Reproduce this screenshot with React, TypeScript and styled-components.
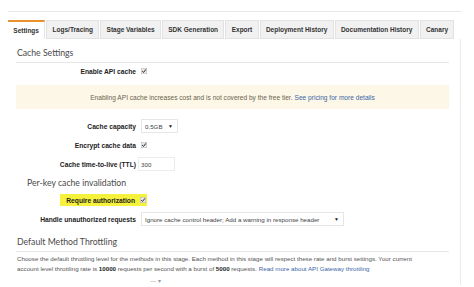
import React from "react";
import styled, { createGlobalStyle } from "styled-components";

const Global = createGlobalStyle`
  html, body { margin: 0; padding: 0; background: #fff; }
  body { font-family: "Liberation Sans", Arial, sans-serif; color: #333; }
  * { box-sizing: border-box; }
`;

const Page = styled.div`
  width: 474px;
  height: 287px;
  overflow: hidden;
  padding: 11px 12px 0 8px;
`;

const TopRule = styled.div`
  height: 1px;
  background: #e8e8e8;
`;

const TabBar = styled.div`
  display: flex;
  gap: 1px;
  margin-top: 8px;
  height: 19px;
  align-items: stretch;
`;

const Tab = styled.div<{ $active?: boolean }>`
  display: flex;
  align-items: center;
  justify-content: center;
  padding: 0 5.3px;
  font-size: 6.5px;
  font-weight: bold;
  color: #333;
  white-space: nowrap;
  background: ${(p) => (p.$active ? "#fff" : "#f1f1f1")};
  border: 1px solid #e2e2e2;
  border-bottom: ${(p) => (p.$active ? "1px solid #fff" : "1px solid #e2e2e2")};
  border-top: ${(p) => (p.$active ? "2px solid #e8912d" : "1px solid #e2e2e2")};
  ${(p) => (p.$active ? "border-left: none;" : "")}
`;

const Panel = styled.div`
  height: 246px;
  margin-right: 1px;
  border-right: 1px solid #ebebeb;
  padding: 0 11px 0 8px;
  display: flex;
  flex-direction: column;
`;

const SectionHeading = styled.div<{ $top: number; $indent?: number; $rule?: boolean }>`
  margin-top: ${(p) => p.$top}px;
  padding-left: ${(p) => p.$indent ?? 1}px;
  font-family: Lato, "Open Sans", sans-serif;
  font-size: 8.7px;
  line-height: 14px;
  color: #4a4a4a;
  ${(p) => (p.$rule ? "padding-bottom: 2px; border-bottom: 1px solid #e6e6e6;" : "")}
`;

const Row = styled.div<{ $top: number }>`
  display: flex;
  align-items: center;
  gap: 5px;
  height: 14px;
  margin-top: ${(p) => p.$top}px;
`;

const Label = styled.div`
  width: 120px;
  text-align: right;
  font-size: 6.7px;
  font-weight: bold;
  color: #222;
  white-space: nowrap;
`;

const Highlight = styled.div`
  display: flex;
  align-items: center;
  gap: 5px;
  margin-left: 44px;
  width: 87px;
  height: 12px;
  padding-right: 1px;
  background: #f6f23c;
`;

const HighlightLabel = styled(Label)`
  width: auto;
  flex: 1;
`;

const Notice = styled.div`
  margin-top: 7px;
  height: 24px;
  background: #fcf7e6;
  display: flex;
  align-items: center;
  justify-content: center;
  font-size: 6.6px;
  color: #6b6352;
  white-space: nowrap;
`;

const Link = styled.span`
  color: #3c66a8;
  margin-left: 2px;
`;

const SelectBox = styled.div<{ $w: number }>`
  width: ${(p) => p.$w}px;
  height: 14px;
  border: 1px solid #e6e6e6;
  background: #fff;
  display: flex;
  align-items: center;
  justify-content: space-between;
  padding: 0 4px 0 3px;
  font-size: 6.2px;
  color: #444;
  white-space: nowrap;
`;

const Caret = styled.span`
  font-size: 5px;
  color: #222;
`;

const InputBox = styled.div`
  width: 37px;
  height: 14px;
  margin-left: -3px;
  border: 1px solid #ececec;
  display: flex;
  align-items: center;
  padding-left: 2px;
  font-size: 6.2px;
  color: #444;
`;

const Paragraph = styled.div`
  margin-top: 2px;
  padding-left: 1px;
  font-size: 6.2px;
  line-height: 10px;
  color: #555;
  white-space: nowrap;
  b { color: #222; }
`;

const Trailing = styled.div`
  margin-top: 3px;
  padding-left: 134px;
  font-size: 6px;
  color: #999;
`;

const Check = () => (
  <svg width="6" height="6" viewBox="0 0 6 6">
    <rect x="0.25" y="0.25" width="5.5" height="5.5" fill="#e9e9e9" stroke="#b5b5b5" strokeWidth="0.5" />
    <path d="M1.2 3.1 L2.5 4.4 L4.9 1.4" fill="none" stroke="#222" strokeWidth="1" />
  </svg>
);

const tabs = [
  "Settings",
  "Logs/Tracing",
  "Stage Variables",
  "SDK Generation",
  "Export",
  "Deployment History",
  "Documentation History",
  "Canary",
];

export default function App() {
  return (
    <Page>
      <Global />
      <TopRule />
      <TabBar>
        {tabs.map((t, i) => (
          <Tab key={t} $active={i === 0}>
            {t}
          </Tab>
        ))}
      </TabBar>
      <Panel>
        <SectionHeading $top={7} $rule>
          Cache Settings
        </SectionHeading>
        <Row $top={1}>
          <Label>Enable API cache</Label>
          <Check />
        </Row>
        <Notice>
          Enabling API cache increases cost and is not covered by the free tier.
          <Link>See pricing for more details</Link>
        </Notice>
        <Row $top={10}>
          <Label>Cache capacity</Label>
          <SelectBox $w={37}>
            0.5GB <Caret>▼</Caret>
          </SelectBox>
        </Row>
        <Row $top={5}>
          <Label>Encrypt cache data</Label>
          <Check />
        </Row>
        <Row $top={5}>
          <Label>Cache time-to-live (TTL)</Label>
          <InputBox>300</InputBox>
        </Row>
        <SectionHeading $top={5} $indent={11}>
          Per-key cache invalidation
        </SectionHeading>
        <Row $top={3}>
          <Highlight>
            <HighlightLabel>Require authorization</HighlightLabel>
            <Check />
          </Highlight>
        </Row>
        <Row $top={5}>
          <Label>Handle unauthorized requests</Label>
          <SelectBox $w={203}>
            Ignore cache control header; Add a warning in response header <Caret>▼</Caret>
          </SelectBox>
        </Row>
        <SectionHeading $top={9} $rule>
          Default Method Throttling
        </SectionHeading>
        <Paragraph>
          Choose the default throttling level for the methods in this stage. Each method in this stage will respect these rate and burst settings. Your current
          <br />
          account level throttling rate is <b>10000</b> requests per second with a burst of <b>5000</b> requests.
          <Link>Read more about API Gateway throttling</Link>
        </Paragraph>
        <Trailing>— ▾</Trailing>
      </Panel>
    </Page>
  );
}
